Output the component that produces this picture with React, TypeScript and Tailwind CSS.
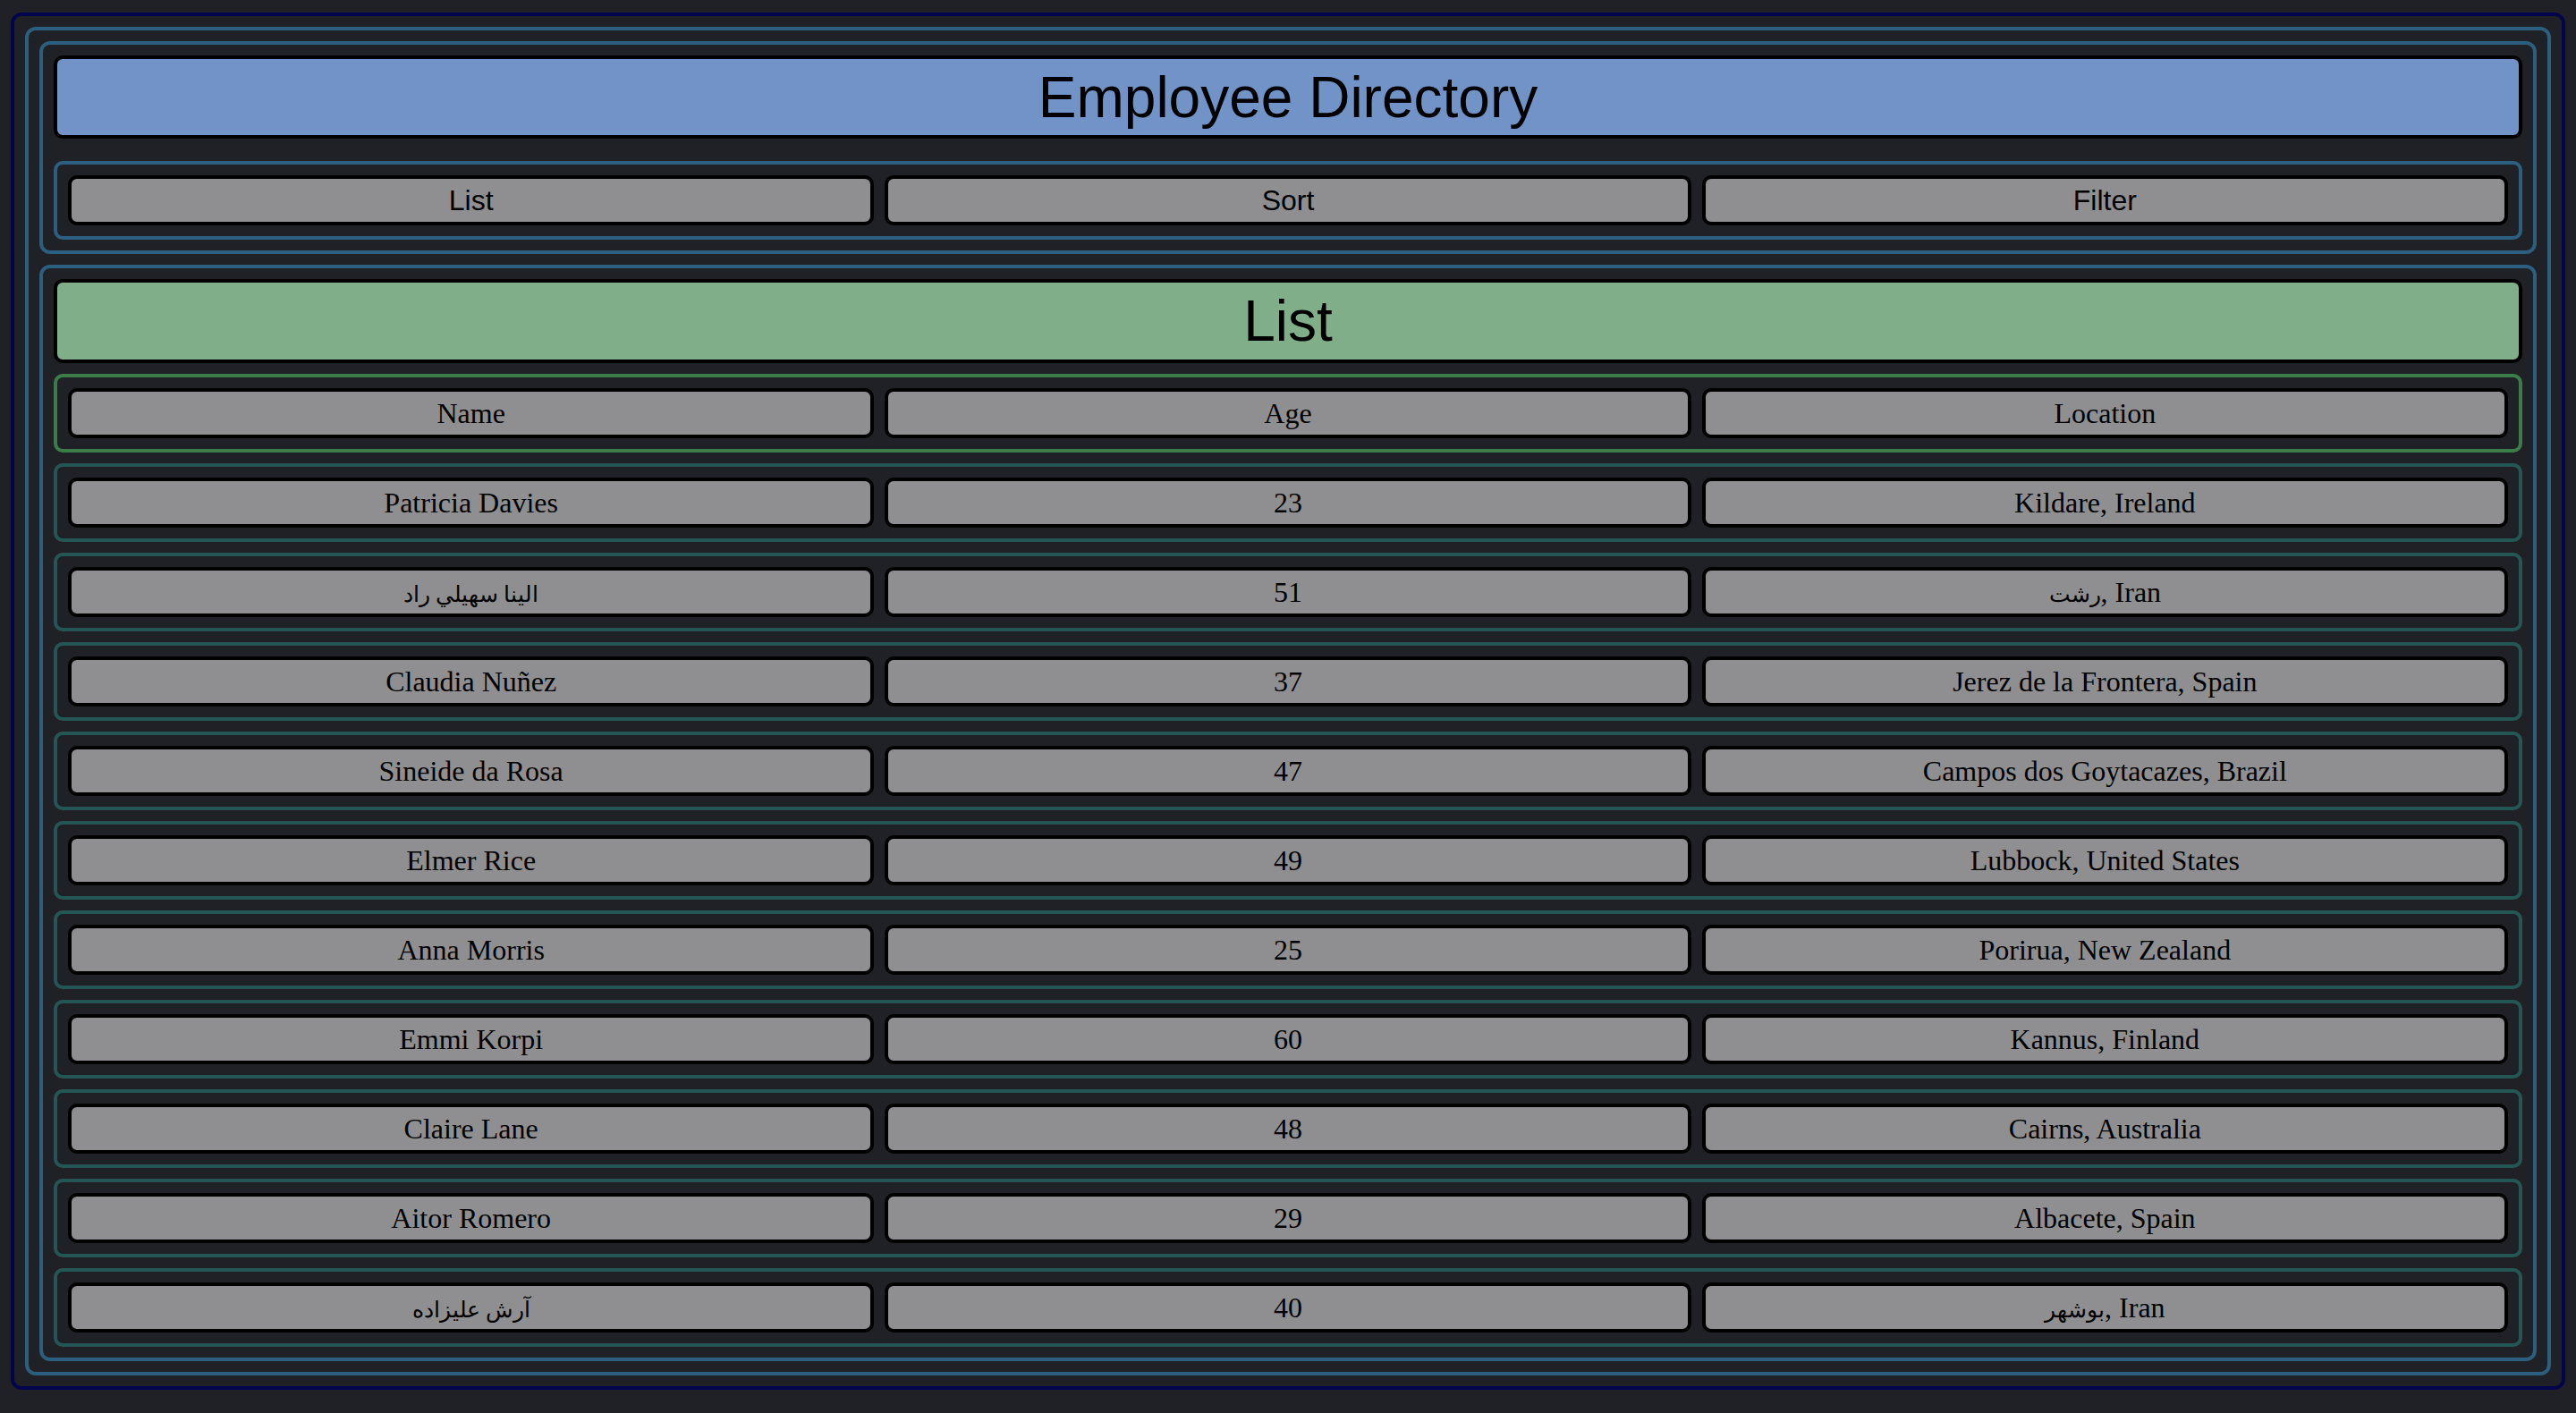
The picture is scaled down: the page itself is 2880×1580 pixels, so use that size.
import React from "react";

type Employee = {
  name: string;
  age: number;
  location: string;
};

const employees: Employee[] = [
  { name: "Patricia Davies", age: 23, location: "Kildare, Ireland" },
  { name: "الينا سهيلي راد", age: 51, location: "رشت, Iran" },
  { name: "Claudia Nuñez", age: 37, location: "Jerez de la Frontera, Spain" },
  { name: "Sineide da Rosa", age: 47, location: "Campos dos Goytacazes, Brazil" },
  { name: "Elmer Rice", age: 49, location: "Lubbock, United States" },
  { name: "Anna Morris", age: 25, location: "Porirua, New Zealand" },
  { name: "Emmi Korpi", age: 60, location: "Kannus, Finland" },
  { name: "Claire Lane", age: 48, location: "Cairns, Australia" },
  { name: "Aitor Romero", age: 29, location: "Albacete, Spain" },
  { name: "آرش علیزاده", age: 40, location: "بوشهر, Iran" },
];

// arabic runs fall back to a wider font, so shrink them a bit
function Text({ value }: { value: string }) {
  const parts = value.split(/([\u0600-\u06FF][\u0600-\u06FF\s]*[\u0600-\u06FF]|[\u0600-\u06FF])/);
  return (
    <>
      {parts.map((p, i) =>
        /[\u0600-\u06FF]/.test(p) ? (
          <span key={i} className="text-[25px]">
            {p}
          </span>
        ) : (
          <React.Fragment key={i}>{p}</React.Fragment>
        )
      )}
    </>
  );
}

function Cell({ children, sans }: { children: React.ReactNode; sans?: boolean }) {
  return (
    <div
      className={
        sans
          ? "h-[56px] flex items-center justify-center rounded-[10px] border-4 border-black bg-[#8f8f91] text-[32px] leading-none text-black font-['Liberation_Sans',Arial,sans-serif]"
          : "h-[56px] flex items-center justify-center rounded-[10px] border-4 border-black bg-[#8f8f91] text-[32px] leading-none text-black font-['Liberation_Serif','Times_New_Roman',serif]"
      }
    >
      <span className="whitespace-nowrap">{children}</span>
    </div>
  );
}

function Row({ cells, header }: { cells: string[]; header?: boolean }) {
  return (
    <div
      className={
        header
          ? "grid grid-cols-3 gap-3 p-3 rounded-[10px] border-4 border-[#3b7d49]"
          : "grid grid-cols-3 gap-3 p-3 rounded-[10px] border-4 border-[#245656]"
      }
    >
      {cells.map((c, i) => (
        <Cell key={i}>
          <Text value={c} />
        </Cell>
      ))}
    </div>
  );
}

export default function App() {
  return (
    <div className="min-h-screen w-full bg-[#202126] pt-[14px] px-3 pb-[26px]">
      {/* outer frame */}
      <div className="rounded-[12px] border-4 border-[#04044c] p-3">
        <div className="rounded-[12px] border-4 border-[#2b5f80] p-3 flex flex-col gap-3">
          {/* Top section */}
          <div className="rounded-[12px] border-4 border-[#2b5f80] p-3">
            <div className="h-[93px] flex items-center justify-center rounded-[10px] border-4 border-black bg-[#7193c7] text-[64px] leading-none text-black font-['Liberation_Sans',Arial,sans-serif]">
              Employee Directory
            </div>
            <div className="mt-[25px] grid grid-cols-3 gap-3 p-3 rounded-[10px] border-4 border-[#2b5f80]">
              <Cell sans>List</Cell>
              <Cell sans>Sort</Cell>
              <Cell sans>Filter</Cell>
            </div>
          </div>

          {/* List section */}
          <div className="rounded-[12px] border-4 border-[#2b5f80] p-3 flex flex-col gap-3">
            <div className="h-[94px] flex items-center justify-center rounded-[10px] border-4 border-black bg-[#80ae88] text-[64px] leading-none text-black font-['Liberation_Sans',Arial,sans-serif]">
              List
            </div>
            <Row header cells={["Name", "Age", "Location"]} />
            {employees.map((e) => (
              <Row key={e.name} cells={[e.name, String(e.age), e.location]} />
            ))}
          </div>
        </div>
      </div>
    </div>
  );
}
